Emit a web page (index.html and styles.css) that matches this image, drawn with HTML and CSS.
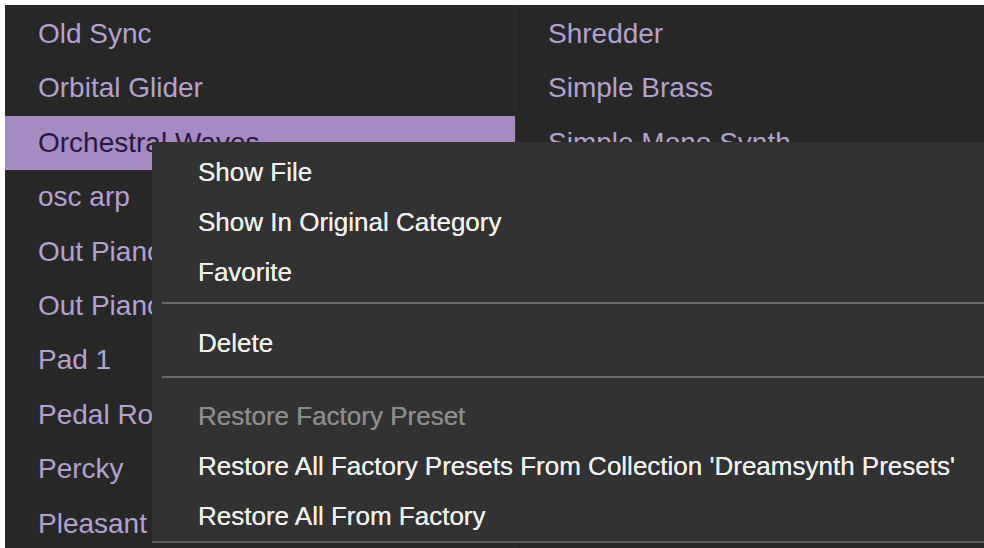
FILE: index.html
```html
<!DOCTYPE html>
<html>
<head>
<meta charset="utf-8">
<link rel="stylesheet" href="styles.css">
</head>
<body>
<div class="panel">
  <ul class="list">
    <li class="row">Old Sync</li>
    <li class="row">Orbital Glider</li>
    <li class="row selected">Orchestral Waves</li>
    <li class="row">osc arp</li>
    <li class="row">Out Piano</li>
    <li class="row">Out Piano 2</li>
    <li class="row">Pad 1</li>
    <li class="row">Pedal Rock</li>
    <li class="row">Percky</li>
    <li class="row">Pleasant</li>
  </ul>
  <div class="divider"></div>
  <ul class="list right">
    <li class="row">Shredder</li>
    <li class="row">Simple Brass</li>
    <li class="row">Simple Mono Synth</li>
  </ul>
  <div class="menu">
    <div class="item">Show File</div>
    <div class="item">Show In Original Category</div>
    <div class="item">Favorite</div>
    <div class="sep sep-a"></div>
    <div class="item">Delete</div>
    <div class="sep sep-b"></div>
    <div class="item disabled">Restore Factory Preset</div>
    <div class="item">Restore All Factory Presets From Collection 'Dreamsynth Presets'</div>
    <div class="item">Restore All From Factory</div>
  </div>
</div>
</body>
</html>
```

FILE: styles.css
```css
html, body {
  margin: 0;
  padding: 0;
  background: #ffffff;
  overflow: hidden;
}
body {
  padding: 5px 0 0 5px;
  width: 984px;
  height: 548px;
  box-sizing: border-box;
}
.panel {
  position: relative;
  height: 543px;
  background: #272727;
  display: grid;
  grid-template-columns: 510px 1px 1fr;
  font-family: "Liberation Sans", Arial, sans-serif;
  overflow: hidden;
}
.list {
  list-style: none;
  margin: 0;
  padding: 2px 0 0 0;
}
.row {
  height: 54.4px;
  line-height: 54.4px;
  padding-left: 33px;
  font-size: 28px;
  color: #b4a1cf;
  white-space: nowrap;
  overflow: hidden;
}
.row.selected {
  background: #a68bc3;
  color: #2a1741;
}
.right .row {
  padding-left: 32px;
}
.divider {
  background: #303030;
}
.menu {
  position: absolute;
  left: 147px;
  top: 137px;
  right: 0;
  height: 401px;
  box-sizing: border-box;
  padding-top: 5px;
  background: #323232;
  border-bottom: 2px solid #5c5c5c;
}
.item {
  height: 50px;
  line-height: 50px;
  padding-left: 46px;
  font-size: 26px;
  color: #f0f0f0;
  white-space: nowrap;
  text-shadow: 0 0 0.6px #f0f0f0;
}
.item.disabled {
  color: #8c8c8c;
  text-shadow: 0 0 0.6px #8c8c8c;
}
.sep {
  height: 2px;
  margin-left: 10px;
  background: #6a6a6a;
}
.sep-a {
  margin-top: 5px;
  margin-bottom: 14px;
}
.sep-b {
  margin-top: 8px;
  margin-bottom: 13px;
}
```
